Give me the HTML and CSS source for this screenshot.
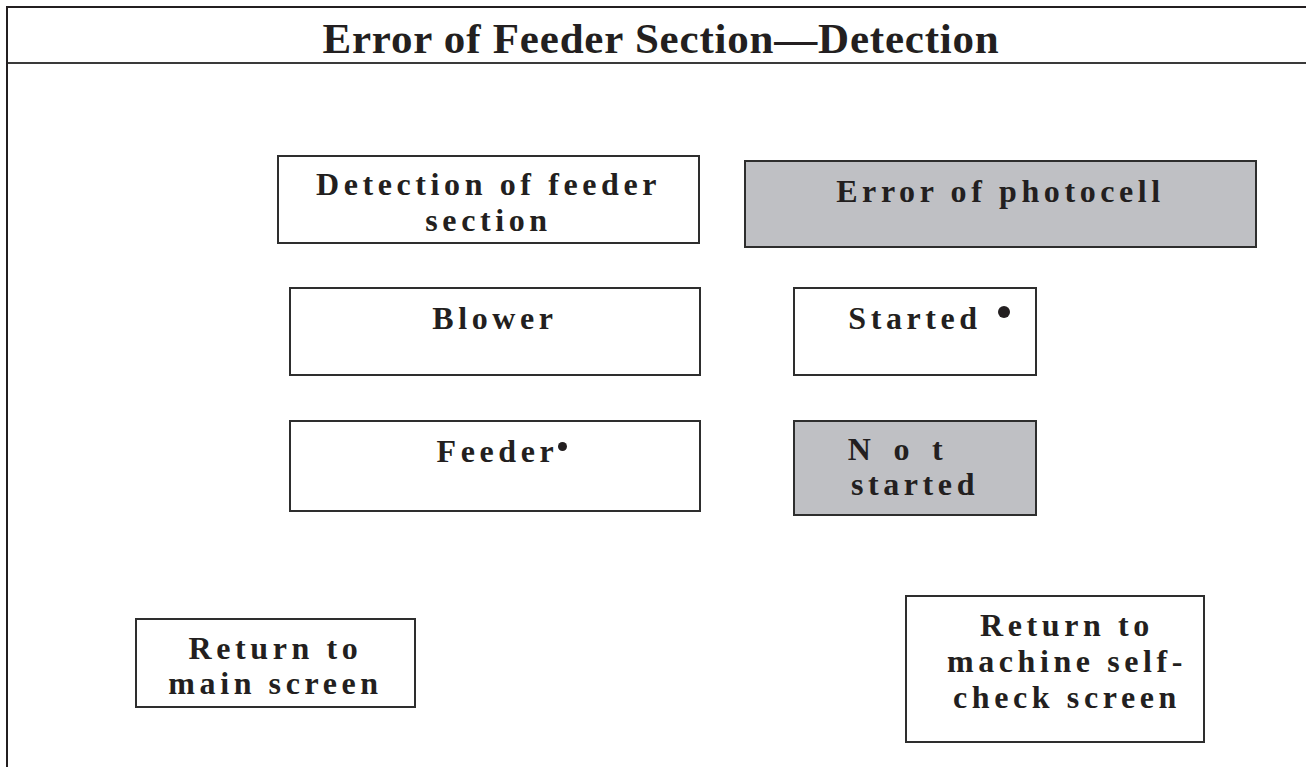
FILE: index.html
```html
<!DOCTYPE html>
<html lang="en">
<head>
    <meta charset="UTF-8">
    <meta name="viewport" content="width=device-width, initial-scale=1.0">
    <title>Error of Feeder Section—Detection</title>
    <link rel="stylesheet" href="styles.css">
</head>
<body>
<div class="frame">
    <header class="title-bar">
        <h1>Error of Feeder Section—Detection</h1>
    </header>

    <div class="panel">
        <div class="row row-top">
            <div class="box box-detect">Detection of feeder<br>section</div>
            <div class="box box-photocell shaded">Error of photocell</div>
        </div>

        <div class="row row-blower">
            <div class="box box-item">Blower</div>
            <div class="box box-state">Started<span class="dot dot-big"></span></div>
        </div>

        <div class="row row-feeder">
            <div class="box box-item box-feeder">Feeder<span class="dot dot-small"></span></div>
            <div class="box box-state box-not shaded"><span class="wide">Not</span><br>started</div>
        </div>

        <div class="row row-bottom">
            <div class="box box-main">Return to<br>main screen</div>
            <div class="box box-selfcheck">Return to<br>machine self-<br>check screen</div>
        </div>
    </div>
</div>
</body>
</html>
```

FILE: styles.css
```css
* {
    box-sizing: border-box;
}

body {
    margin: 0;
    padding: 0;
    background: #fff;
    color: #231f20;
    font-family: "Liberation Serif", "Times New Roman", serif;
    overflow: hidden;
}

.frame {
    margin: 6px 0 0 6px;
    min-height: calc(100vh - 6px);
    border-top: 2px solid #231f20;
    border-left: 2px solid #231f20;
}

.title-bar {
    height: 56px;
    border-bottom: 2px solid #3a3a3a;
    padding: 8px 0 0 8px;
    text-align: center;
}

h1 {
    margin: 0;
    font-size: 43px;
    line-height: 46px;
    font-weight: bold;
    letter-spacing: 0.8px;
}

.panel {
    padding-top: 91px;
}

.row {
    display: flex;
    align-items: flex-start;
}

.box {
    border: 2px solid #2e2e2e;
    background: #fff;
    text-align: center;
    font-size: 32px;
    font-weight: bold;
    line-height: 36px;
    letter-spacing: 4.6px;
    padding-top: 11px;
}

.shaded {
    background: #bfc0c4;
}

/* row 1 */
.box-detect {
    margin-left: 269px;
    width: 423px;
    height: 89px;
    padding-top: 9px;
}

.box-photocell {
    margin-left: 44px;
    margin-top: 5px;
    width: 513px;
    height: 88px;
}

/* row 2 + 3 */
.row-blower {
    margin-top: 39px;
}

.row-feeder {
    margin-top: 44px;
}

.box-item {
    margin-left: 281px;
    width: 412px;
    height: 89px;
}

.box-feeder {
    height: 92px;
}

.box-state {
    margin-left: 92px;
    width: 244px;
    height: 89px;
}

.box-not {
    height: 96px;
    line-height: 35px;
    padding-top: 10px;
}

.wide {
    letter-spacing: 22.5px;
    margin-right: 17px;
}

.dot {
    display: inline-block;
    border-radius: 50%;
    background: #231f20;
    vertical-align: 11px;
}

.dot-big {
    width: 12px;
    height: 12px;
    margin-left: 16px;
    margin-right: -28px;
}

.dot-small {
    width: 9px;
    height: 9px;
    margin-right: -14px;
}

/* row 4 */
.row-bottom {
    margin-top: 79px;
}

.box-main {
    margin-left: 127px;
    margin-top: 23px;
    width: 281px;
    height: 90px;
    line-height: 35px;
}

.box-selfcheck {
    margin-left: 489px;
    width: 300px;
    height: 148px;
    padding-top: 10px;
    padding-left: 24px;
}
```
